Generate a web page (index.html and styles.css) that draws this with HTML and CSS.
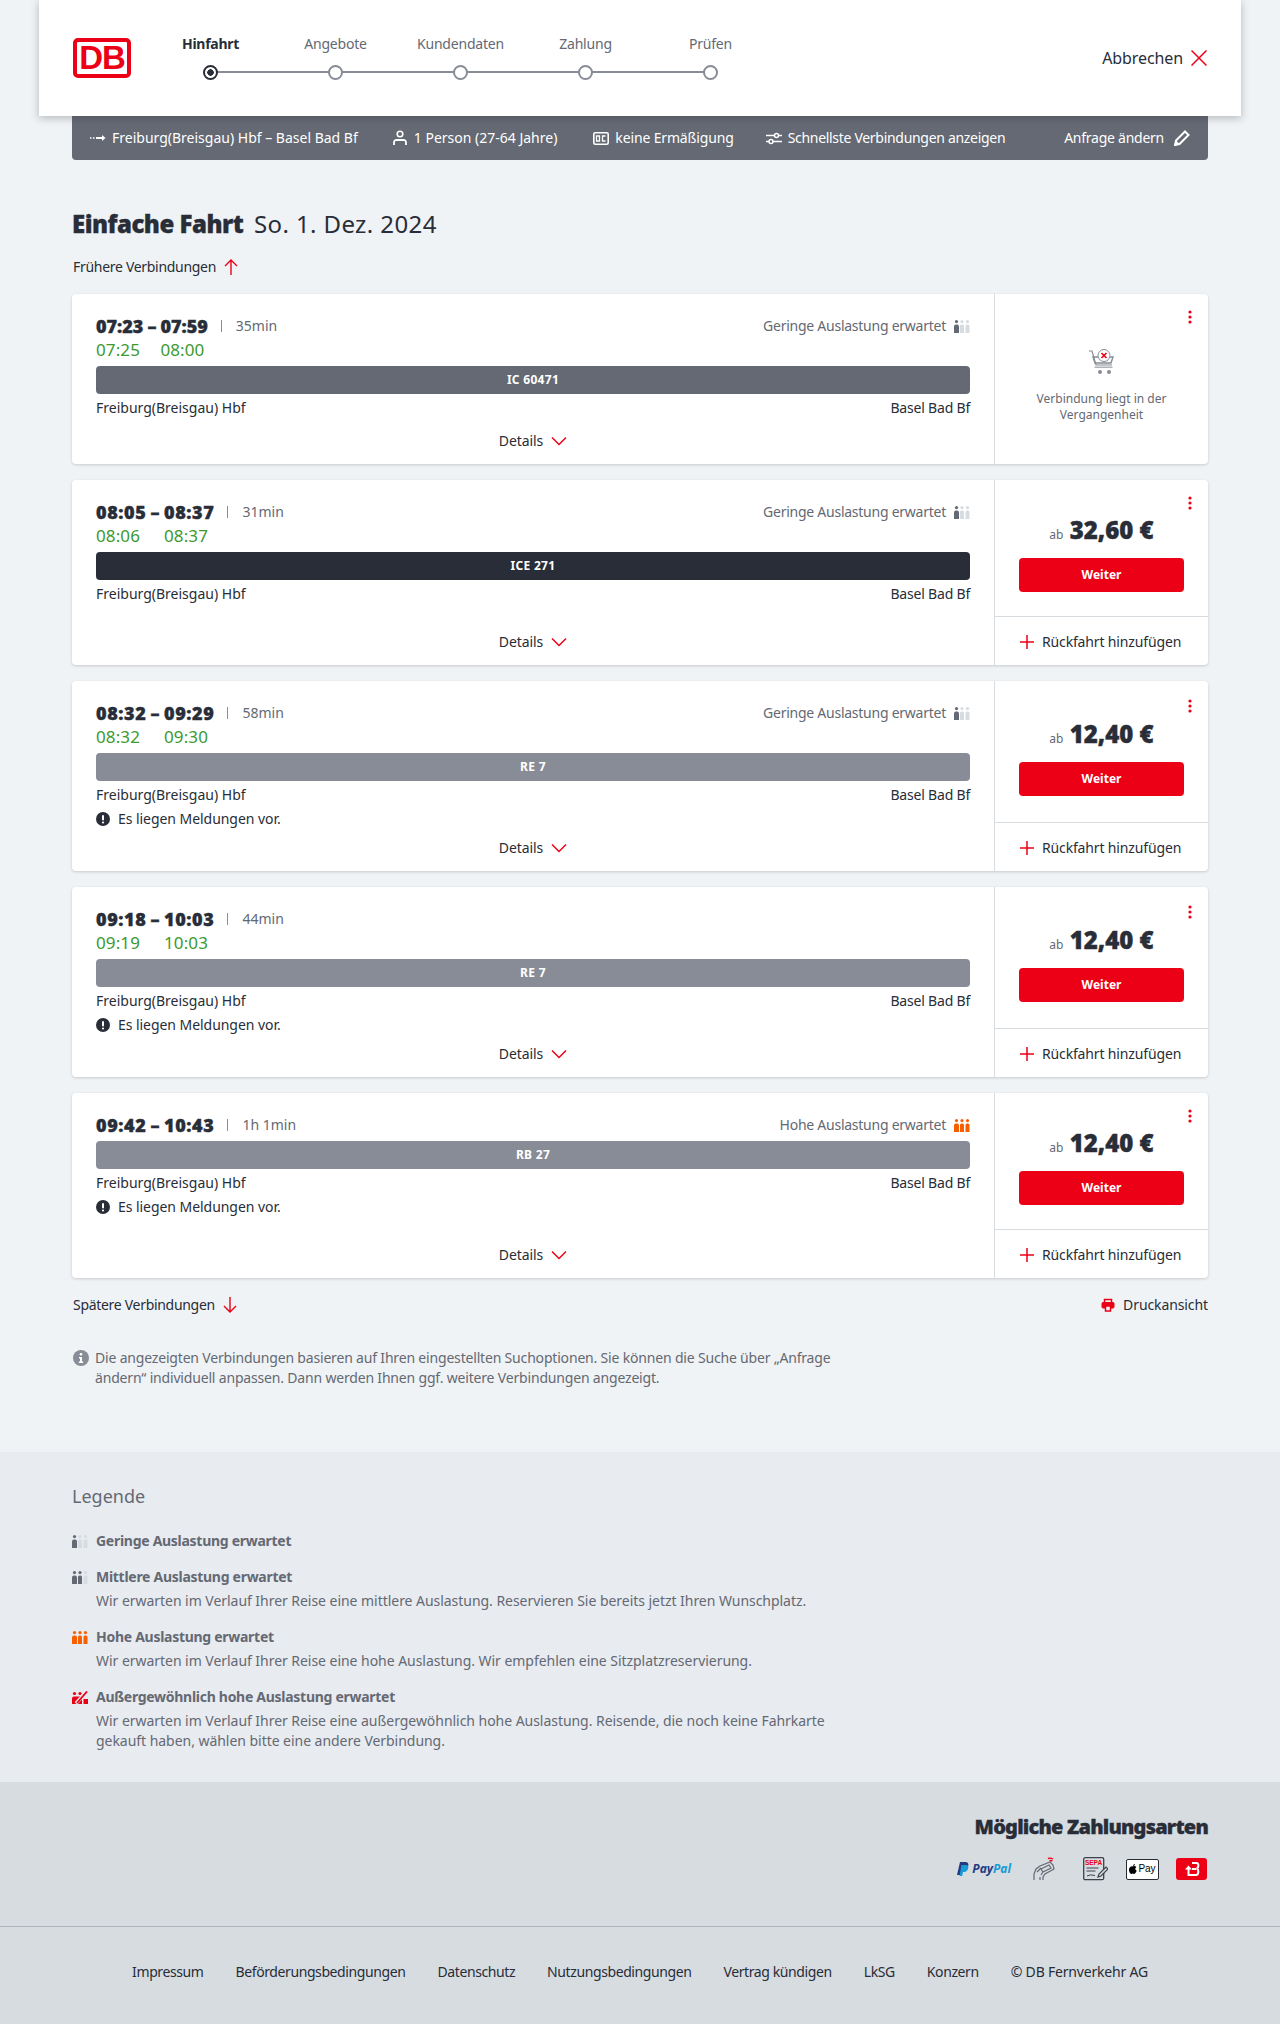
FILE: index.html
```html
<!DOCTYPE html>
<html lang="de">
<head>
    <meta charset="UTF-8">
    <meta name="viewport" content="width=device-width, initial-scale=1.0">
    <title>Angebote</title>
    <link rel="stylesheet" href="styles.css">
</head>
<body>
    <svg class="defs" width="0" height="0" aria-hidden="true">
        <symbol id="occ-low" viewBox="0 0 16 13">
            <circle cx="2.5" cy="1.6" r="1.6" fill="#646973"/><path d="M0 6.5a2 2 0 0 1 2-2h1a2 2 0 0 1 2 2V13H0z" fill="#646973"/>
            <circle cx="8" cy="1.6" r="1.6" fill="#d7dce1"/><path d="M6 6a1.5 1.5 0 0 1 1.5-1.5h1A1.5 1.5 0 0 1 10 6v7H6z" fill="#d7dce1"/>
            <circle cx="13.5" cy="1.6" r="1.6" fill="#d7dce1"/><path d="M11.500 6a1.500 1.500 0 0 1 1.500-1.500h1A1.500 1.500 0 0 1 15.500 6v7h-4z" fill="#d7dce1"/>
        </symbol>
        <symbol id="occ-mid" viewBox="0 0 16 13">
            <circle cx="2.5" cy="1.600" r="1.600" fill="#646973"/><path d="M0 6.500a2 2 0 0 1 2-2h1a2 2 0 0 1 2 2V13H0z" fill="#646973"/>
            <circle cx="8" cy="1.600" r="1.600" fill="#646973"/><path d="M6 6a1.500 1.500 0 0 1 1.500-1.500h1A1.500 1.500 0 0 1 10 6v7H6z" fill="#646973"/>
            <circle cx="13.500" cy="1.600" r="1.600" fill="#d7dce1"/><path d="M11.500 6a1.500 1.500 0 0 1 1.500-1.500h1A1.500 1.500 0 0 1 15.500 6v7h-4z" fill="#d7dce1"/>
        </symbol>
        <symbol id="occ-high" viewBox="0 0 16 13">
            <circle cx="2.500" cy="1.600" r="1.600" fill="#f75f00"/><path d="M0 6.500a2 2 0 0 1 2-2h1a2 2 0 0 1 2 2V13H0z" fill="#f75f00"/>
            <circle cx="8" cy="1.600" r="1.600" fill="#f75f00"/><path d="M6 6a1.500 1.500 0 0 1 1.500-1.500h1A1.500 1.500 0 0 1 10 6v7H6z" fill="#f75f00"/>
            <circle cx="13.500" cy="1.600" r="1.600" fill="#f75f00"/><path d="M11.500 6a1.500 1.500 0 0 1 1.500-1.500h1A1.500 1.500 0 0 1 15.500 6v7h-4z" fill="#f75f00"/>
        </symbol>
        <symbol id="chevron" viewBox="0 0 16 10">
            <path d="M1 1.500l7 7 7-7" fill="none" stroke="#ec0016" stroke-width="1.500"/>
        </symbol>
        <symbol id="plus" viewBox="0 0 16 16">
            <path d="M8 1v14M1 8h14" fill="none" stroke="#ec0016" stroke-width="1.500"/>
        </symbol>
        <symbol id="notice" viewBox="0 0 14 14">
            <circle cx="7" cy="7" r="7" fill="#282d37"/><rect x="6" y="3" width="2" height="5.500" rx="1" fill="#fff"/><circle cx="7" cy="10.500" r="1.100" fill="#fff"/>
        </symbol>
        <symbol id="dots" viewBox="0 0 4 14">
            <circle cx="2" cy="2" r="1.600" fill="#ec0016"/><circle cx="2" cy="7" r="1.600" fill="#ec0016"/><circle cx="2" cy="12" r="1.600" fill="#ec0016"/>
        </symbol>
    </svg>

    <header class="topbar">
        <div class="logo">DB</div>
        <ol class="steps">
            <li class="step active"><span>Hinfahrt</span><i></i></li>
            <li class="step"><span>Angebote</span><i></i></li>
            <li class="step"><span>Kundendaten</span><i></i></li>
            <li class="step"><span>Zahlung</span><i></i></li>
            <li class="step"><span>Prüfen</span><i></i></li>
        </ol>
        <a class="cancel">Abbrechen
            <svg width="16" height="16" viewBox="0 0 16 16"><path d="M.5.500l15 15M15.500.500l-15 15" stroke="#ec0016" stroke-width="1.500"/></svg>
        </a>
    </header>

    <main class="page">
        <div class="search-bar">
            <span class="item item-route">
                <svg width="16" height="8" viewBox="0 0 16 8"><path d="M0 4h1.500M3 4h1.500" stroke="#fff" stroke-width="1.500"/><path d="M6 4h8" stroke="#fff" stroke-width="2"/><path d="M12 1l3.500 3L12 7z" fill="#fff"/></svg>
                Freiburg(Breisgau) Hbf – Basel Bad Bf
            </span>
            <span class="item item-person">
                <svg width="14" height="16" viewBox="0 0 14 16"><circle cx="7" cy="4" r="2.800" fill="none" stroke="#fff" stroke-width="1.600"/><path d="M1 15v-2.500A2.500 2.500 0 0 1 3.500 10h7a2.500 2.500 0 0 1 2.500 2.500V15" fill="none" stroke="#fff" stroke-width="1.800"/></svg>
                1 Person (27-64 Jahre)
            </span>
            <span class="item item-card">
                <svg width="16" height="13" viewBox="0 0 16 13"><rect x=".8" y=".8" width="14.400" height="11.400" rx="1.500" fill="none" stroke="#fff" stroke-width="1.600"/><path d="M3.500 4h3v5h-3zM12.500 4h-3v5h3" fill="none" stroke="#fff" stroke-width="1.300"/></svg>
                keine Ermäßigung
            </span>
            <span class="item item-filter">
                <svg width="16" height="13" viewBox="0 0 16 13"><path d="M0 3.500h9M12 3.500h4M0 9.500h3M7 9.500h9" stroke="#fff" stroke-width="1.600"/><circle cx="10.500" cy="3.500" r="2" fill="none" stroke="#fff" stroke-width="1.500"/><circle cx="5" cy="9.500" r="2" fill="none" stroke="#fff" stroke-width="1.500"/></svg>
                Schnellste Verbindungen anzeigen
            </span>
            <span class="item item-edit">Anfrage ändern
                <svg width="16" height="16" viewBox="0 0 16 16"><path d="M11 1.500l3.500 3.500L5.500 14 1 15l1-4.500z" fill="none" stroke="#fff" stroke-width="2"/><path d="M1 15l1-4.500L5.500 14z" fill="#fff"/></svg>
            </span>
        </div>

        <h1 class="title"><strong>Einfache Fahrt</strong> So. 1. Dez. 2024</h1>

        <a class="more earlier">Frühere Verbindungen
            <svg width="14" height="16" viewBox="0 0 14 16"><path d="M7 16V1M1 7l6-6 6 6" fill="none" stroke="#ec0016" stroke-width="1.400"/></svg>
        </a>

        <article class="card card-past">
            <div class="trip">
                <div class="times">
                    <b>07:23</b><b class="dash">–</b><b>07:59</b>
                    <span class="duration">35min</span>
                    <span class="occupancy">Geringe Auslastung erwartet <svg width="16" height="13"><use href="#occ-low"/></svg></span>
                    <span class="real">07:25</span><span class="real real-end">08:00</span>
                </div>
                <div class="train train-ic">IC 60471</div>
                <div class="stations"><span>Freiburg(Breisgau) Hbf</span><span>Basel Bad Bf</span></div>
                <a class="details">Details <svg width="16" height="10"><use href="#chevron"/></svg></a>
            </div>
            <aside class="offer">
                <svg class="menu" width="4" height="14"><use href="#dots"/></svg>
                <div class="offer-top past">
                    <svg width="26" height="26" viewBox="0 0 26 26">
                        <path d="M0 2h3l4 14h16" fill="none" stroke="#878c96" stroke-width="1.200"/>
                        <path d="M4 8h20l-2 6H6z" fill="none" stroke="#878c96" stroke-width="1.400"/>
                        <rect x="5.500" y="17.500" width="18" height="1.500" fill="#afb4bb"/>
                        <circle cx="11" cy="23" r="2" fill="#878c96"/><circle cx="20" cy="23" r="2" fill="#878c96"/>
                        <circle cx="15" cy="6.500" r="6" fill="#fff" stroke="#878c96"/>
                        <path d="M12.500 4l5 5M17.500 4l-5 5" stroke="#ec0016" stroke-width="1.600"/>
                    </svg>
                    <p>Verbindung liegt in der Vergangenheit</p>
                </div>
            </aside>
        </article>

        <article class="card">
            <div class="trip">
                <div class="times">
                    <b>08:05</b><b class="dash">–</b><b>08:37</b>
                    <span class="duration">31min</span>
                    <span class="occupancy">Geringe Auslastung erwartet <svg width="16" height="13"><use href="#occ-low"/></svg></span>
                    <span class="real">08:06</span><span class="real real-end">08:37</span>
                </div>
                <div class="train train-ice">ICE 271</div>
                <div class="stations"><span>Freiburg(Breisgau) Hbf</span><span>Basel Bad Bf</span></div>
                <a class="details">Details <svg width="16" height="10"><use href="#chevron"/></svg></a>
            </div>
            <aside class="offer">
                <svg class="menu" width="4" height="14"><use href="#dots"/></svg>
                <div class="offer-top">
                    <div class="price"><small>ab</small> 32,60 €</div>
                    <button class="btn">Weiter</button>
                </div>
                <a class="return"><svg width="16" height="16"><use href="#plus"/></svg> Rückfahrt hinzufügen</a>
            </aside>
        </article>

        <article class="card card-tall">
            <div class="trip">
                <div class="times">
                    <b>08:32</b><b class="dash">–</b><b>09:29</b>
                    <span class="duration">58min</span>
                    <span class="occupancy">Geringe Auslastung erwartet <svg width="16" height="13"><use href="#occ-low"/></svg></span>
                    <span class="real">08:32</span><span class="real real-end">09:30</span>
                </div>
                <div class="train train-re">RE 7</div>
                <div class="stations"><span>Freiburg(Breisgau) Hbf</span><span>Basel Bad Bf</span></div>
                <div class="message"><svg width="14" height="14"><use href="#notice"/></svg> Es liegen Meldungen vor.</div>
                <a class="details">Details <svg width="16" height="10"><use href="#chevron"/></svg></a>
            </div>
            <aside class="offer">
                <svg class="menu" width="4" height="14"><use href="#dots"/></svg>
                <div class="offer-top">
                    <div class="price"><small>ab</small> 12,40 €</div>
                    <button class="btn">Weiter</button>
                </div>
                <a class="return"><svg width="16" height="16"><use href="#plus"/></svg> Rückfahrt hinzufügen</a>
            </aside>
        </article>

        <article class="card card-tall">
            <div class="trip">
                <div class="times">
                    <b>09:18</b><b class="dash">–</b><b>10:03</b>
                    <span class="duration">44min</span>
                    <span class="occupancy"></span>
                    <span class="real">09:19</span><span class="real real-end">10:03</span>
                </div>
                <div class="train train-re">RE 7</div>
                <div class="stations"><span>Freiburg(Breisgau) Hbf</span><span>Basel Bad Bf</span></div>
                <div class="message"><svg width="14" height="14"><use href="#notice"/></svg> Es liegen Meldungen vor.</div>
                <a class="details">Details <svg width="16" height="10"><use href="#chevron"/></svg></a>
            </div>
            <aside class="offer">
                <svg class="menu" width="4" height="14"><use href="#dots"/></svg>
                <div class="offer-top">
                    <div class="price"><small>ab</small> 12,40 €</div>
                    <button class="btn">Weiter</button>
                </div>
                <a class="return"><svg width="16" height="16"><use href="#plus"/></svg> Rückfahrt hinzufügen</a>
            </aside>
        </article>

        <article class="card">
            <div class="trip">
                <div class="times">
                    <b>09:42</b><b class="dash">–</b><b>10:43</b>
                    <span class="duration">1h 1min</span>
                    <span class="occupancy">Hohe Auslastung erwartet <svg width="16" height="13"><use href="#occ-high"/></svg></span>
                </div>
                <div class="train train-re">RB 27</div>
                <div class="stations"><span>Freiburg(Breisgau) Hbf</span><span>Basel Bad Bf</span></div>
                <div class="message"><svg width="14" height="14"><use href="#notice"/></svg> Es liegen Meldungen vor.</div>
                <a class="details">Details <svg width="16" height="10"><use href="#chevron"/></svg></a>
            </div>
            <aside class="offer">
                <svg class="menu" width="4" height="14"><use href="#dots"/></svg>
                <div class="offer-top">
                    <div class="price"><small>ab</small> 12,40 €</div>
                    <button class="btn">Weiter</button>
                </div>
                <a class="return"><svg width="16" height="16"><use href="#plus"/></svg> Rückfahrt hinzufügen</a>
            </aside>
        </article>

        <div class="after-list">
            <a class="more">Spätere Verbindungen
                <svg width="14" height="16" viewBox="0 0 14 16"><path d="M7 0v15M1 9l6 6 6-6" fill="none" stroke="#ec0016" stroke-width="1.400"/></svg>
            </a>
            <a class="more print">
                <svg width="14" height="14" viewBox="0 0 14 14"><path d="M3.500 4V1.500h7V4" fill="none" stroke="#ec0016" stroke-width="1.500"/><path d="M4 10H2a1 1 0 0 1-1-1V5.500a1 1 0 0 1 1-1h10a1 1 0 0 1 1 1V9a1 1 0 0 1-1 1h-2" fill="#ec0016" stroke="#ec0016"/><rect x="4.500" y="8" width="5" height="5" fill="#f0f3f5" stroke="#ec0016" stroke-width="1.500"/></svg>
                Druckansicht
            </a>
        </div>

        <div class="note">
            <svg width="16" height="16" viewBox="0 0 16 16"><circle cx="8" cy="8" r="8" fill="#878c96"/><circle cx="8" cy="4.300" r="1.300" fill="#fff"/><path d="M6 7h3v4.500h1.200V13H5.800v-1.500H7V8.500H6z" fill="#fff"/></svg>
            <p>Die angezeigten Verbindungen basieren auf Ihren eingestellten Suchoptionen. Sie können die Suche über „Anfrage ändern“ individuell anpassen. Dann werden Ihnen ggf. weitere Verbindungen angezeigt.</p>
        </div>
    </main>

    <section class="legend">
        <div class="wrap">
            <h2>Legende</h2>
            <div class="legend-item">
                <svg width="16" height="13"><use href="#occ-low"/></svg>
                <div><h3>Geringe Auslastung erwartet</h3></div>
            </div>
            <div class="legend-item">
                <svg width="16" height="13"><use href="#occ-mid"/></svg>
                <div>
                    <h3>Mittlere Auslastung erwartet</h3>
                    <p>Wir erwarten im Verlauf Ihrer Reise eine mittlere Auslastung. Reservieren Sie bereits jetzt Ihren Wunschplatz.</p>
                </div>
            </div>
            <div class="legend-item">
                <svg width="16" height="13"><use href="#occ-high"/></svg>
                <div>
                    <h3>Hohe Auslastung erwartet</h3>
                    <p>Wir erwarten im Verlauf Ihrer Reise eine hohe Auslastung. Wir empfehlen eine Sitzplatzreservierung.</p>
                </div>
            </div>
            <div class="legend-item">
                <svg width="16" height="13" viewBox="0 0 16 13">
                    <circle cx="2.500" cy="2.500" r="1.600" fill="#ec0016"/><circle cx="8" cy="2.500" r="1.600" fill="#ec0016"/>
                    <path d="M0 7.500a2 2 0 0 1 2-2h8v7.500H0zM11.500 8h4.500v5h-4.500z" fill="#ec0016"/>
                    <path d="M14.500 .5L4 12.500" stroke="#e8ebf0" stroke-width="3.500"/><path d="M15 .5L5 12" stroke="#ec0016" stroke-width="1.800"/>
                </svg>
                <div>
                    <h3>Außergewöhnlich hohe Auslastung erwartet</h3>
                    <p>Wir erwarten im Verlauf Ihrer Reise eine außergewöhnlich hohe Auslastung. Reisende, die noch keine Fahrkarte gekauft haben, wählen bitte eine andere Verbindung.</p>
                </div>
            </div>
        </div>
    </section>

    <section class="payment">
        <div class="wrap">
            <h2>Mögliche Zahlungsarten</h2>
            <div class="pay-icons">
                <span class="paypal">
                    <svg width="12" height="14" viewBox="0 0 12 14"><path d="M3 0h5c3 0 4 2 3 4.500S7.500 8 6 8H4.500L3.500 13H0z" fill="#253b80"/><path d="M4.500 3h4c2.500 0 3.500 1.500 2.500 4S8 10 6.500 10H6l-.8 4H2.500z" fill="#179bd7"/></svg>
                    <b>Pay</b><b class="pal">Pal</b>
                </span>
                <svg class="pay-hand" width="23" height="24" viewBox="0 0 23 24">
                    <path d="M1 23v-6l2-5 4-3 10-4 3 3 1 4-9 5-2 3v3M7 23v-3" fill="none" stroke="#646973" stroke-width="1.200"/>
                    <path d="M8 12l8-4 2 3-8 4zM4 15l4-4M8 18l2-3" fill="none" stroke="#646973" stroke-width="1.200"/>
                    <path d="M15 1.500q2.500-1 5 .5M16.500 3.800q1.500-.8 3 .2" fill="none" stroke="#ec0016" stroke-width="1.400"/>
                </svg>
                <svg class="pay-sepa" width="25" height="24" viewBox="0 0 25 24">
                    <rect x=".7" y=".7" width="20" height="22" rx="1.500" fill="none" stroke="#3c414b" stroke-width="1.300"/>
                    <text x="10.500" y="7.500" text-anchor="middle" font-family="Liberation Sans" font-size="6.500" font-weight="700" fill="#ec0016">SEPA</text>
                    <path d="M3.500 11h12M3.500 14h9M4 19q3-2 8-.5" fill="none" stroke="#3c414b"/>
                    <path d="M15 20l1-3 7-7 2 2-7 7z" fill="#d7dce1" stroke="#3c414b" stroke-width="1.200"/>
                </svg>
                <span class="applepay">
                    <svg width="8" height="10" viewBox="0 0 8 10"><path d="M4 2.500c1-.6 2.500-.6 3.300.5C5.800 4 6 6.200 7.700 6.800 7 8.500 6 10 5 10c-.6 0-.8-.4-1.400-.4S2.800 10 2.300 10C1 10 0 7.500 0 5.800 0 3 2.500 1.800 4 2.500zM4 2c0-1 .8-2 1.900-2C6 1 5 2 4 2z" fill="#000"/></svg>Pay
                </span>
                <span class="bahncard">
                    <svg width="18" height="14" viewBox="0 0 18 14"><path d="M9 1h4.500c2.500 0 2.500 5 0 5.500 2.500.5 2.500 6.500-.5 6.500H5.500V7M9 7h4" fill="none" stroke="#fff" stroke-width="2"/><path d="M2 7.500l3.500-4 3.500 4z" fill="#fff"/></svg>
                </span>
            </div>
        </div>
    </section>

    <footer class="footer">
        <a>Impressum</a>
        <a>Beförderungsbedingungen</a>
        <a>Datenschutz</a>
        <a>Nutzungsbedingungen</a>
        <a>Vertrag kündigen</a>
        <a>LkSG</a>
        <a>Konzern</a>
        <a>© DB Fernverkehr AG</a>
    </footer>
</body>
</html>
```

FILE: styles.css
```css
* {
    box-sizing: border-box;
}
body {
    margin: 0;
    background-color: #f0f3f5;
    color: #282d37;
    font-family: "Noto Sans", Arial, sans-serif;
    font-size: 14px;
    line-height: 20px;
}
.defs {
    position: absolute;
}
svg {
    flex: none;
}

/* header */
.topbar {
    position: relative;
    z-index: 2;
    display: flex;
    align-items: center;
    width: 1202px;
    height: 116px;
    margin: 0 auto;
    padding: 0 34px;
    background-color: #fff;
    box-shadow: 0 2px 8px rgba(40, 45, 55, 0.3);
}
.logo {
    width: 58px;
    height: 40px;
    border: 4px solid #ec0016;
    border-radius: 5px;
    color: #ec0016;
    font-family: "Liberation Sans", Arial, sans-serif;
    font-size: 33px;
    font-weight: 700;
    line-height: 32px;
    letter-spacing: -1px;
    text-align: center;
}
.steps {
    display: flex;
    margin: -2px 0 0 17px;
    padding: 0;
    list-style: none;
}
.step {
    position: relative;
    display: flex;
    flex-direction: column;
    align-items: center;
    width: 125px;
    color: #646973;
    letter-spacing: -0.2px;
}
.step span {
    height: 20px;
}
.step i {
    position: relative;
    z-index: 1;
    width: 15px;
    height: 15px;
    margin-top: 11px;
    border: 2px solid #878c96;
    border-radius: 50%;
    background-color: #fff;
}
.step:not(:last-child)::after {
    content: "";
    position: absolute;
    top: 37px;
    left: 50%;
    width: 100%;
    height: 2px;
    background-color: #878c96;
}
.step.active {
    color: #282d37;
    font-weight: 700;
    letter-spacing: -0.3px;
}
.step.active i {
    border-color: #282d37;
    background: radial-gradient(circle, #282d37 0 3px, #fff 3.5px);
}
.cancel {
    display: flex;
    align-items: center;
    gap: 8px;
    margin-left: auto;
    font-size: 16px;
    letter-spacing: -0.1px;
}

/* page */
.page,
.wrap {
    width: 1136px;
    margin: 0 auto;
}
.search-bar {
    display: flex;
    align-items: center;
    height: 44px;
    padding: 0 18px;
    border-radius: 0 0 4px 4px;
    background-color: #646973;
    color: #fff;
}
.item {
    display: flex;
    align-items: center;
    gap: 6px;
}
.item-person {
    gap: 7px;
    margin-left: 35px;
}
.item-card {
    margin-left: 36px;
    letter-spacing: -0.15px;
}
.item-filter {
    margin-left: 32px;
    letter-spacing: -0.3px;
}
.item-edit {
    gap: 10px;
    margin-left: auto;
    letter-spacing: -0.25px;
}
.title {
    margin: 48px 0 0;
    font-size: 24px;
    font-weight: 400;
    line-height: 32px;
    letter-spacing: 0.4px;
}
.title strong {
    margin-right: 4px;
    font-weight: 900;
    letter-spacing: -0.5px;
    -webkit-text-stroke: 0.3px #282d37;
}
.more {
    display: flex;
    align-items: center;
    gap: 8px;
    margin-left: 1px;
    letter-spacing: -0.3px;
}
.earlier {
    margin: 17px 0 17px 1px;
}

/* cards */
.card {
    display: flex;
    min-height: 185px;
    margin-bottom: 16px;
    border-radius: 4px;
    background-color: #fff;
    box-shadow: 0 1px 3px rgba(40, 45, 55, 0.2);
}
.card-past {
    min-height: 170px;
}
.trip {
    display: flex;
    flex-direction: column;
    flex: 1;
    padding: 20px 24px 0;
    border-right: 1px solid #d7dce1;
}
.times {
    display: grid;
    grid-template-columns: auto auto auto auto 1fr;
    align-items: center;
    line-height: 24px;
}
.times b {
    font-size: 18px;
    font-weight: 900;
    letter-spacing: 0.6px;
    -webkit-text-stroke: 0.4px #282d37;
}
.card-past .times b {
    letter-spacing: 0;
}
.times .dash {
    padding: 0 4px;
}
.duration {
    margin-left: 13px;
    padding-left: 15px;
    color: #646973;
    background: linear-gradient(#878c96, #878c96) 0 center / 1px 12px no-repeat;
}
.occupancy {
    display: flex;
    align-items: center;
    justify-content: flex-end;
    gap: 8px;
    color: #646973;
    letter-spacing: -0.25px;
}
.real {
    grid-column: 1;
    color: #3c9a30;
    font-size: 17px;
    letter-spacing: 0.1px;
}
.real-end {
    grid-column: 3;
}
.train {
    height: 28px;
    margin-top: 4px;
    border-radius: 4px;
    color: #fff;
    font-size: 12px;
    font-weight: 700;
    line-height: 28px;
    letter-spacing: 0.3px;
    text-align: center;
}
.train-ic {
    background-color: #646973;
}
.train-ice {
    background-color: #282d37;
}
.train-re {
    background-color: #878c96;
}
.stations {
    display: flex;
    justify-content: space-between;
    margin-top: 4px;
}
.stations span:last-child {
    letter-spacing: -0.2px;
}
.message {
    display: flex;
    align-items: center;
    gap: 8px;
    margin-top: 4px;
    letter-spacing: -0.05px;
}
.details {
    display: flex;
    align-items: center;
    justify-content: center;
    gap: 8px;
    height: 42px;
    margin-top: auto;
    padding-bottom: 4px;
    letter-spacing: -0.1px;
}
.offer {
    position: relative;
    display: flex;
    flex-direction: column;
    flex: none;
    width: 213px;
}
.menu {
    position: absolute;
    top: 16px;
    right: 16px;
}
.card-tall .menu {
    top: 18px;
}
.offer-top {
    display: flex;
    flex-direction: column;
    align-items: center;
    justify-content: center;
    flex: 1;
    padding: 9px 24px 0;
}
.offer-top.past {
    padding: 14px 24px 0;
    color: #646973;
    font-size: 12px;
    line-height: 16px;
    text-align: center;
}
.past p {
    margin: 16px 0 0;
}
.price {
    height: 36px;
    font-size: 24px;
    font-weight: 900;
    line-height: 34px;
    -webkit-text-stroke: 0.4px #282d37;
}
.price small {
    color: #646973;
    font-size: 12px;
    font-weight: 400;
    -webkit-text-stroke: 0;
}
.btn {
    width: 165px;
    height: 34px;
    margin-top: 9px;
    padding-bottom: 2px;
    border: 0;
    border-radius: 4px;
    background-color: #ec0016;
    color: #fff;
    font-family: inherit;
    font-size: 12px;
    font-weight: 700;
}
.return {
    display: flex;
    align-items: center;
    gap: 7px;
    height: 49px;
    padding: 2px 0 0 24px;
    border-top: 1px solid #d7dce1;
    letter-spacing: -0.15px;
}
.after-list {
    display: flex;
    justify-content: space-between;
    margin-top: 17px;
}
.print {
    gap: 8px;
    letter-spacing: -0.1px;
}
.note {
    display: flex;
    gap: 6px;
    width: 780px;
    margin: 33px 0 64px 1px;
    color: #646973;
    letter-spacing: -0.18px;
}
.note svg {
    margin-top: 2px;
}
.note p {
    margin: 0;
}

/* legend */
.legend {
    height: 330px;
    padding-top: 32px;
    background-color: #e8ebf0;
    color: #646973;
}
.legend h2 {
    margin: 0 0 23px;
    font-size: 18px;
    font-weight: 400;
    line-height: 24px;
}
.legend-item {
    display: flex;
    gap: 8px;
    width: 770px;
    margin-bottom: 16px;
}
.legend-item svg {
    margin-top: 4px;
}
.legend-item h3 {
    margin: 0;
    font-size: 14px;
    font-weight: 700;
    letter-spacing: -0.28px;
}
.legend-item p {
    margin: 4px 0 0;
    letter-spacing: -0.04px;
}

/* payment + footer */
.payment {
    height: 145px;
    padding-top: 33px;
    border-bottom: 1px solid #afb4bb;
    background-color: #d7dce1;
}
.payment h2 {
    margin: 0;
    font-size: 20px;
    font-weight: 900;
    line-height: 24px;
    letter-spacing: -0.8px;
    text-align: right;
    -webkit-text-stroke: 0.3px #282d37;
}
.pay-icons {
    display: flex;
    align-items: center;
    justify-content: flex-end;
    gap: 22px;
    height: 24px;
    margin-top: 18px;
}
.pay-sepa {
    margin-left: 5px;
}
.paypal {
    display: flex;
    align-items: center;
    gap: 3px;
    color: #253b80;
    font-size: 12px;
    font-style: italic;
}
.paypal .pal {
    margin-left: -3px;
    color: #179bd7;
}
.applepay {
    display: flex;
    align-items: center;
    justify-content: center;
    gap: 1px;
    width: 33px;
    height: 21px;
    margin-left: -4px;
    border: 1px solid #282d37;
    border-radius: 2px;
    background-color: #fff;
    color: #000;
    font-family: "Liberation Sans", Arial, sans-serif;
    font-size: 10px;
}
.bahncard {
    display: flex;
    align-items: center;
    justify-content: center;
    width: 31px;
    height: 22px;
    margin-left: -5px;
    margin-right: 1px;
    border-radius: 3px;
    background-color: #ec0016;
}
.footer {
    display: flex;
    align-items: center;
    justify-content: center;
    gap: 32px;
    height: 97px;
    padding-bottom: 8px;
    background-color: #d7dce1;
    letter-spacing: -0.4px;
}
.footer a:last-child {
    letter-spacing: -0.2px;
}
```
